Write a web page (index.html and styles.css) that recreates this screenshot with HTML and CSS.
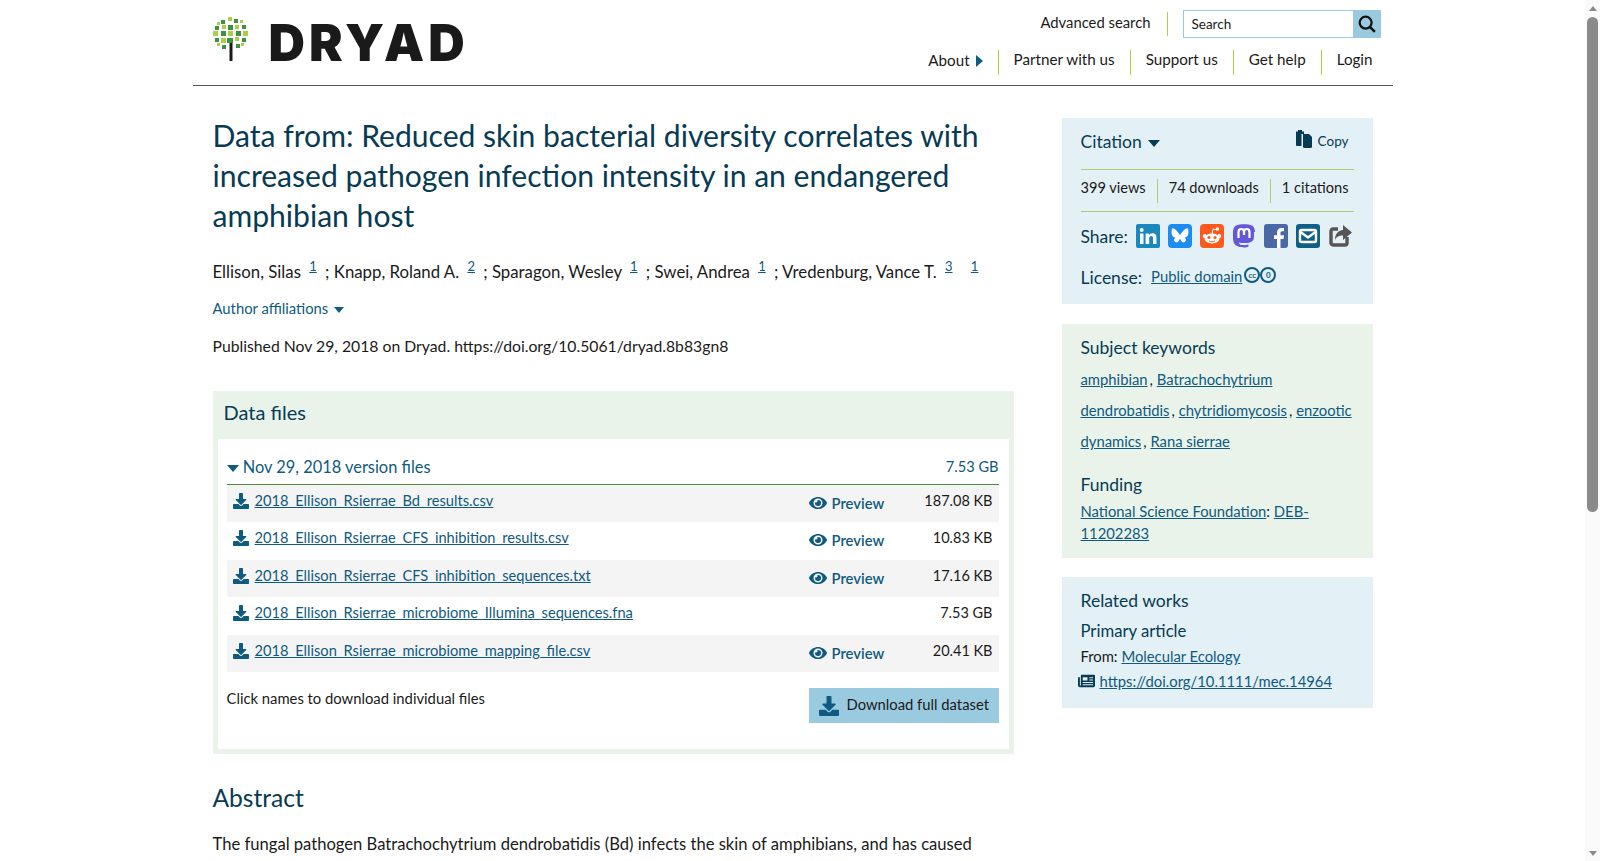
FILE: index.html
```html
<!DOCTYPE html>
<html lang="en">
<head>
  <meta charset="UTF-8" />
  <title>Data from: Reduced skin bacterial diversity | Dryad</title>
  <link rel="stylesheet" href="styles.css">
</head>
<body>
  <svg class="sprites" width="0" height="0">
    <symbol id="i-download" viewBox="0 0 512 512">
      <path d="M216 0h80c13 0 24 11 24 24v168h88c18 0 27 21 14 34L270 378c-8 8-20 8-28 0L90 226c-13-13-4-34 14-34h88V24c0-13 11-24 24-24zM512 376v112c0 13-11 24-24 24H24c-13 0-24-11-24-24V376c0-13 11-24 24-24h147l49 49c20 20 52 20 72 0l49-49h147c13 0 24 11 24 24z"/>
    </symbol>
    <symbol id="i-eye" viewBox="0 0 576 512">
      <path d="M572 241C518 136 410 64 288 64S58 136 4 241a32 32 0 0 0 0 30c54 105 162 177 284 177s230-72 284-177a32 32 0 0 0 0-30zM288 400a144 144 0 1 1 144-144 144 144 0 0 1-144 144zm0-240a95 95 0 0 0-25 4 48 48 0 0 1-67 67 96 96 0 1 0 92-71z"/>
    </symbol>
  </svg>

  <div class="page">
    <header class="site-header">
      <a class="logo" href="#">
        <svg class="logo-tree" width="36" height="44" viewBox="0 0 36 44">
          <rect x="16.500" y="24" width="3" height="20" fill="#1a1a1a"/>
          <g fill="#3f9142">
            <rect x="8" y="3" width="4" height="4"/><rect x="21" y="2" width="4" height="4"/>
            <rect x="2" y="9" width="4" height="4"/><rect x="15" y="8" width="5" height="5"/><rect x="29" y="8" width="4" height="4"/>
            <rect x="8" y="14" width="5" height="5"/><rect x="23" y="14" width="5" height="5"/>
            <rect x="2" y="21" width="4" height="4"/><rect x="29" y="21" width="4" height="4"/>
            <rect x="14" y="21" width="6" height="5"/><rect x="9" y="28" width="4" height="4"/><rect x="23" y="27" width="4" height="4"/>
          </g>
          <g fill="#a8cf45">
            <rect x="15" y="0" width="4" height="4"/><rect x="27" y="3" width="3" height="3"/><rect x="4" y="5" width="3" height="3"/>
            <rect x="9" y="8" width="4" height="4"/><rect x="22" y="8" width="4" height="4"/><rect x="0" y="14" width="5" height="5"/>
            <rect x="15" y="14" width="5" height="5"/><rect x="30" y="14" width="5" height="5"/><rect x="8" y="21" width="5" height="5"/>
            <rect x="22" y="20" width="4" height="4"/><rect x="4" y="26" width="3" height="3"/><rect x="28" y="26" width="3" height="3"/>
          </g>
        </svg>
        <span class="logo-word">DRYAD</span>
      </a>
      <div class="header-right">
        <div class="util-row">
          <a class="util-link" href="#">Advanced search</a>
          <form class="search">
            <input class="search-input" type="text" placeholder="Search">
            <button class="search-btn" type="button" aria-label="Search">
              <svg width="18" height="18" viewBox="0 0 16 16"><circle cx="6.800" cy="6.800" r="5.300" fill="none" stroke="#111" stroke-width="2"/><path d="M10.800 10.800l4.200 4.200" stroke="#111" stroke-width="2.200"/></svg>
            </button>
          </form>
        </div>
        <nav class="main-nav">
          <a class="nav-item nav-about" href="#">About <span class="caret-right"></span></a>
          <a class="nav-item" href="#">Partner with us</a>
          <a class="nav-item" href="#">Support us</a>
          <a class="nav-item" href="#">Get help</a>
          <a class="nav-item" href="#">Login</a>
        </nav>
      </div>
    </header>

    <div class="layout">
      <main class="content">
        <h1 class="title">Data from: Reduced skin bacterial diversity correlates with increased pathogen infection intensity in an endangered amphibian host</h1>
        <p class="authors">Ellison, Silas <sup><a href="#">1</a></sup> ; Knapp, Roland A. <sup><a href="#">2</a></sup> ; Sparagon, Wesley <sup><a href="#">1</a></sup> ; Swei, Andrea <sup><a href="#">1</a></sup> ; Vredenburg, Vance T. <sup><a href="#">3</a></sup> <sup class="sup-last"><a href="#">1</a></sup></p>
        <p class="affil">Author affiliations <span class="caret-down"></span></p>
        <p class="published">Published Nov 29, 2018 on Dryad. https://doi.org/10.5061/dryad.8b83gn8</p>

        <section class="files">
          <h2 class="files-title">Data files</h2>
          <div class="files-inner">
            <div class="version">
              <span class="version-name"><span class="caret-down"></span> Nov 29, 2018 version files</span>
              <span class="version-size">7.53 GB</span>
            </div>
            <ul class="file-list">
              <li class="file">
                <a class="file-name" href="#"><svg class="dl-icon"><use href="#i-download"/></svg><span>2018_Ellison_Rsierrae_Bd_results.csv</span></a>
                <a class="preview" href="#"><svg class="eye"><use href="#i-eye"/></svg>Preview</a>
                <span class="size">187.08 KB</span>
              </li>
              <li class="file">
                <a class="file-name" href="#"><svg class="dl-icon"><use href="#i-download"/></svg><span>2018_Ellison_Rsierrae_CFS_inhibition_results.csv</span></a>
                <a class="preview" href="#"><svg class="eye"><use href="#i-eye"/></svg>Preview</a>
                <span class="size">10.83 KB</span>
              </li>
              <li class="file">
                <a class="file-name" href="#"><svg class="dl-icon"><use href="#i-download"/></svg><span>2018_Ellison_Rsierrae_CFS_inhibition_sequences.txt</span></a>
                <a class="preview" href="#"><svg class="eye"><use href="#i-eye"/></svg>Preview</a>
                <span class="size">17.16 KB</span>
              </li>
              <li class="file">
                <a class="file-name" href="#"><svg class="dl-icon"><use href="#i-download"/></svg><span>2018_Ellison_Rsierrae_microbiome_Illumina_sequences.fna</span></a>
                <span class="size">7.53 GB</span>
              </li>
              <li class="file">
                <a class="file-name" href="#"><svg class="dl-icon"><use href="#i-download"/></svg><span>2018_Ellison_Rsierrae_microbiome_mapping_file.csv</span></a>
                <a class="preview" href="#"><svg class="eye"><use href="#i-eye"/></svg>Preview</a>
                <span class="size">20.41 KB</span>
              </li>
            </ul>
            <div class="files-foot">
              <span>Click names to download individual files</span>
              <a class="dl-all" href="#"><svg class="dl-icon-big"><use href="#i-download"/></svg><span class="dl-all-text">Download full dataset</span></a>
            </div>
          </div>
        </section>

        <h2 class="abstract-title">Abstract</h2>
        <p class="abstract">The fungal pathogen Batrachochytrium dendrobatidis (Bd) infects the skin of amphibians, and has caused</p>
      </main>

      <aside class="sidebar">
        <section class="panel panel-blue panel-cite">
          <div class="cite-row">
            <span class="cite-label">Citation <span class="caret-down caret-dark"></span></span>
            <span class="copy">
              <svg width="18" height="20" viewBox="0 0 18 20"><path d="M1 2.500h2V1h4v1.500h2V5H6.500v12H2a1 1 0 0 1-1-1z" fill="#073b54"/><path d="M8 5h6l3 3v9.500a1.500 1.500 0 0 1-1.500 1.500H9.500A1.500 1.500 0 0 1 8 17.500z" fill="#073b54"/></svg>
              Copy
            </span>
          </div>
          <div class="stats">
            <span>399 views</span>
            <span>74 downloads</span>
            <span>1 citations</span>
          </div>
          <div class="share">
            <span class="share-label">Share:</span>
            <svg class="soc" viewBox="0 0 24 24"><rect width="24" height="24" rx="2" fill="#1b87bd"/><path d="M4 9.500h3.500V20H4zM5.700 4a2 2 0 1 1 0 4 2 2 0 0 1 0-4zM9.600 9.500H13V11c.6-1 1.800-1.800 3.500-1.800 3.300 0 4 2.200 4 5V20H17v-5.200c0-1.300-.1-2.700-1.700-2.700S13.200 13.300 13.200 14.700V20H9.600z" fill="#fff"/></svg>
            <svg class="soc" viewBox="0 0 24 24"><rect width="24" height="24" rx="4" fill="#1c8cf0"/><path d="M12 11.200c-.8-1.600-3-4.500-5-6-1.900-1.300-2.700-1-3.200 0-.4.700-.3 4.300.3 6.100.7 1.900 2.900 2.600 4.700 2.300-3 .5-3.700 2.100-2.100 3.800 3 3 4.300-.8 4.700-1.800l.6-.5.6.5c.4 1 1.700 4.800 4.700 1.800 1.600-1.700.9-3.300-2.100-3.800 1.800.3 4-.4 4.700-2.300.6-1.800.7-5.400.3-6.100-.5-1-1.300-1.300-3.200 0-2 1.500-4.200 4.400-5 6z" fill="#fff"/></svg>
            <svg class="soc" viewBox="0 0 24 24"><rect width="24" height="24" rx="4" fill="#fc5a1c"/><ellipse cx="12" cy="14.500" rx="7.500" ry="5" fill="#fff"/><circle cx="4.800" cy="12" r="2" fill="#fff"/><circle cx="19.200" cy="12" r="2" fill="#fff"/><circle cx="17.500" cy="5" r="1.700" fill="#fff"/><path d="M12 10l1-5 4 .8" fill="none" stroke="#fff" stroke-width="1"/><circle cx="9" cy="13.500" r="1.500" fill="#fc5a1c"/><circle cx="15" cy="13.500" r="1.500" fill="#fc5a1c"/><path d="M9 16.800c1.800 1.200 4.200 1.200 6 0" fill="none" stroke="#fc5a1c" stroke-width="1"/></svg>
            <svg class="soc" viewBox="0 0 24 24"><path d="M23 8C23 3 20 1.500 20 1.500 18 .6 15 .3 12 .3S6 .6 4 1.500c0 0-3 1.500-3 6.500 0 6-.6 12 4 14 3 1.300 6 1.500 8 1.400 1.700-.1 3.500-.7 3.500-.7l-.1-2.200s-2.300.8-4.700.6c-2.500-.1-4.500-.4-4.800-2.700 2.800.7 5.500.8 8.300.6 3-.3 6.200-1.900 6.500-4.300.6-2.600.3-6.700.3-6.700z" fill="#6458d6"/><path d="M6.500 14V8.300C6.500 6.300 7.700 5 9.300 5c1.600 0 2.700 1.100 2.700 3v3M12 11V8c0-1.900 1.100-3 2.700-3 1.600 0 2.800 1.300 2.800 3.300V14" fill="none" stroke="#fff" stroke-width="2.200"/></svg>
            <svg class="soc" viewBox="0 0 24 24"><rect width="24" height="24" rx="3" fill="#4a68a5"/><path d="M13 24v-9h-3v-3.800h3V8.600C13 5.500 14.900 4 17.500 4c1.200 0 2.300.1 2.500.1v3.200h-1.800c-1.400 0-1.700.7-1.700 1.700v2.200h3.500l-.5 3.800h-3v9z" fill="#fff"/></svg>
            <svg class="soc" viewBox="0 0 24 24"><rect width="24" height="24" rx="3" fill="#0f6086"/><rect x="4" y="6" width="16" height="12" rx="1.500" fill="none" stroke="#fff" stroke-width="2.400"/><path d="M4.500 8l7.500 5.500L19.500 8" fill="none" stroke="#fff" stroke-width="2.400"/></svg>
            <svg class="soc" viewBox="0 0 24 24"><path d="M19 13v6a2 2 0 0 1-2 2H5a2 2 0 0 1-2-2V7a2 2 0 0 1 2-2h5" fill="none" stroke="#555" stroke-width="3.400"/><path d="M15 1l9 7.500-9 7.500v-4.500c-4 0-6.500 1-8 4.500 0-6 3-9.500 8-10z" fill="#555"/></svg>
          </div>
          <div class="license">
            <span class="license-label">License:</span>
            <a href="#">Public domain</a>
            <span class="cc"><span class="cc-mark">cc</span><span class="cc-mark">0</span></span>
          </div>
        </section>

        <section class="panel panel-green panel-kw">
          <h3 class="side-title">Subject keywords</h3>
          <p class="keywords"><a href="#">amphibian</a><span class="sep">,</span> <a href="#">Batrachochytrium</a> <a href="#">dendrobatidis</a><span class="sep">,</span> <a href="#">chytridiomycosis</a><span class="sep">,</span> <a href="#">enzootic</a> <a href="#">dynamics</a><span class="sep">,</span> <a href="#">Rana sierrae</a></p>
          <h3 class="side-title funding-title">Funding</h3>
          <p class="funding"><a href="#">National Science Foundation</a><span class="sep">:</span> <a class="grant" href="#">DEB-</a><br><a href="#">11202283</a></p>
        </section>

        <section class="panel panel-blue panel-rel">
          <h3 class="side-title">Related works</h3>
          <h4 class="side-sub">Primary article</h4>
          <p class="from">From: <a href="#">Molecular Ecology</a></p>
          <p class="rel-doi">
            <svg class="news" viewBox="0 0 18 14"><path d="M3 1.500a1 1 0 0 1 1-1h13a1 1 0 0 1 1 1V12a1.500 1.500 0 0 1-1.500 1.500H2A2 2 0 0 1 0 11.500V3h2v8.500a.5.500 0 0 0 1 0zM5 3v3.500h5V3zm7 0v1h4V3zm0 2.500v1h4v-1zM5 8v1h11V8zm0 2.500v1h11v-1z" fill="#073b54" fill-rule="evenodd"/></svg>
            <a href="#">https://doi.org/10.1111/mec.14964</a>
          </p>
        </section>
      </aside>
    </div>
  </div>

  <div class="scrollbar">
    <span class="sb-up"></span>
    <span class="sb-thumb"></span>
    <span class="sb-down"></span>
  </div>
</body>
</html>
```

FILE: styles.css
```css
* {
  box-sizing: border-box;
}
html {
  scrollbar-width: none;
}
body {
  margin: 0;
  padding-right: 15px;
  min-height: 1436px;
  font-family: Lato, sans-serif;
  font-size: 14.800px;
  color: #1a1a1a;
  background: #fff;
}
a {
  color: #0f5a80;
}
p, h1, h2, h3, h4, ul {
  margin: 0;
  padding: 0;
  font-weight: 400;
}
.sprites {
  position: absolute;
}
.page {
  width: 1200px;
  margin: 0 auto;
}

/* drawn scrollbar, lies over the page edge */
.scrollbar {
  position: fixed;
  top: 0;
  right: 0;
  bottom: 0;
  display: flex;
  flex-direction: column;
  align-items: center;
  width: 15px;
  background: #fafafa;
}
.sb-up, .sb-down {
  width: 0;
  height: 0;
  border-left: 4.500px solid transparent;
  border-right: 4.500px solid transparent;
}
.sb-up {
  margin-top: 6px;
  border-bottom: 5px solid #8a8a8a;
}
.sb-thumb {
  width: 11px;
  height: 495px;
  margin-top: 6px;
  border-radius: 6px;
  background: #8a8a8a;
}
.sb-down {
  margin-top: auto;
  margin-bottom: 5px;
  border-top: 5px solid #8a8a8a;
}

/* header */
.site-header {
  display: flex;
  justify-content: space-between;
  height: 86px;
  padding: 0 12px 0 20px;
  border-bottom: 1px solid #555;
}
.logo {
  display: flex;
  align-items: center;
  gap: 20px;
  height: 78px;
  text-decoration: none;
}
.logo-word {
  margin-top: 6px;
  font-family: Inter, sans-serif;
  font-weight: 900;
  font-size: 50.500px;
  letter-spacing: 4px;
  color: #1a1a1a;
}
.header-right {
  display: flex;
  flex-direction: column;
  align-items: flex-end;
}
.util-row {
  display: flex;
  align-items: center;
  height: 48px;
}
.util-link {
  padding: 0 16px 3px 0;
  height: 24px;
  line-height: 20px;
  color: #1a1a1a;
  text-decoration: none;
  border-right: 1px solid #a8cf45;
}
.search {
  display: flex;
  margin-left: 15px;
}
.search-input {
  width: 170px;
  height: 28px;
  padding: 0 8px;
  font: 13.500px Lato, sans-serif;
  border: 1px solid #9acae0;
  border-right: 0;
  outline: 0;
}
.search-input::placeholder {
  color: #1a1a1a;
  opacity: 1;
}
.search-btn {
  display: flex;
  align-items: center;
  justify-content: center;
  width: 28px;
  height: 28px;
  padding: 0;
  border: 0;
  background: #9acae0;
}
.main-nav {
  display: flex;
  align-items: center;
  margin-top: 2px;
  padding-right: 8px;
}
.nav-item {
  height: 25px;
  padding: 0 15px;
  font-size: 15.200px;
  line-height: 19px;
  color: #1a1a1a;
  text-decoration: none;
  border-left: 1px solid #a8cf45;
}
.nav-item:last-child {
  padding-right: 0;
}
.nav-about {
  border-left: 0;
  padding-top: 1px;
}
.caret-right {
  display: inline-block;
  width: 0;
  height: 0;
  margin-left: 2px;
  border-left: 7px solid #0f5a80;
  border-top: 6px solid transparent;
  border-bottom: 6px solid transparent;
  vertical-align: -1px;
}
.caret-down {
  display: inline-block;
  width: 0;
  height: 0;
  margin-left: 2px;
  border-top: 7px solid #0f5a80;
  border-left: 6px solid transparent;
  border-right: 6px solid transparent;
  vertical-align: 1px;
}
.caret-dark {
  border-top-color: #073b54;
}

/* main column */
.layout {
  display: flex;
  justify-content: space-between;
  padding: 0 20px;
}
.content {
  width: 801px;
}
.title {
  margin-top: 29px;
  font-size: 30.100px;
  line-height: 40px;
  color: #073b54;
}
.authors {
  margin-top: 16px;
  font-size: 16.800px;
  line-height: 30px;
}
.authors sup {
  font-size: 13px;
  margin: 0 4px;
}
.sup-last {
  margin-left: 10px !important;
}
.affil {
  margin-top: 9px;
  line-height: 24px;
  color: #0f5a80;
}
.affil .caret-down {
  border-top-width: 6px;
  border-left-width: 5px;
  border-right-width: 5px;
}
.published {
  margin-top: 14px;
  font-size: 15.750px;
  line-height: 24px;
}
.files {
  margin-top: 33px;
  height: 363px;
  padding: 0 5px 5px;
  background: #e9f3ea;
}
.files-title {
  height: 48px;
  padding-left: 6px;
  font-size: 20px;
  line-height: 43px;
  color: #073b54;
}
.files-inner {
  height: 310px;
  padding: 14px 10px 0 9px;
  background: #fff;
}
.version {
  display: flex;
  justify-content: space-between;
  align-items: center;
  height: 32px;
  padding-bottom: 3px;
  border-bottom: 1px solid #4f8a3c;
  color: #0f5a80;
}
.version-name {
  font-size: 16.400px;
}
.version-name .caret-down {
  margin-left: 0;
}
.version-size {
  font-size: 14.600px;
}
.file-list {
  list-style: none;
}
.file {
  display: flex;
  align-items: flex-start;
  height: 37.500px;
  padding: 6px 6px 0;
}
.file:nth-child(odd) {
  background: #f4f4f4;
}
.file-name {
  display: flex;
  align-items: center;
  gap: 6px;
  width: 576px;
  font-size: 14.650px;
  line-height: 20px;
}
.dl-icon {
  width: 16px;
  height: 16px;
  fill: #0f5a80;
  flex: none;
}
.preview {
  display: flex;
  align-items: center;
  gap: 5px;
  margin-top: 2px;
  font-weight: 600;
  line-height: 20px;
  text-decoration: none;
}
.eye {
  width: 18px;
  height: 16px;
  fill: #0f5a80;
}
.size {
  margin-left: auto;
  font-size: 14.500px;
  line-height: 20px;
}
.files-foot {
  display: flex;
  justify-content: space-between;
  margin-top: 16px;
  line-height: 20px;
}
.dl-all {
  display: flex;
  align-items: center;
  gap: 8px;
  width: 190px;
  height: 35px;
  padding-left: 10px;
  color: #1a1a1a;
  text-decoration: none;
  white-space: nowrap;
  background: #9acae0;
}
.dl-all-text {
  margin-top: -4px;
}
.dl-icon-big {
  width: 20px;
  height: 20px;
  fill: #0f5a80;
}
.abstract-title {
  margin-top: 28px;
  font-size: 24.600px;
  line-height: 32px;
  color: #073b54;
}
.abstract {
  margin-top: 17px;
  font-size: 16.600px;
  line-height: 26px;
}

/* sidebar */
.sidebar {
  width: 311px;
  margin-top: 32px;
}
.panel {
  padding: 0 19px;
}
.panel-blue {
  background: #e3f0f6;
}
.panel-green {
  background: #e9f3ea;
}
.panel-cite {
  height: 186px;
}
.cite-row {
  display: flex;
  justify-content: space-between;
  height: 52px;
  padding-top: 11px;
  border-bottom: 1px solid #a8cf70;
  color: #073b54;
}
.cite-label {
  font-size: 17.500px;
  line-height: 26px;
}
.copy {
  display: flex;
  align-items: flex-start;
  gap: 5px;
  padding-right: 5px;
  font-size: 13.500px;
  line-height: 24px;
}
.stats {
  display: flex;
  align-items: center;
  height: 42px;
  border-bottom: 1px solid #a8cf70;
  font-size: 14.600px;
  white-space: nowrap;
}
.stats span {
  height: 24px;
  padding-right: 11px;
  line-height: 18px;
}
.stats span + span {
  padding-left: 11px;
  border-left: 1px solid #a8cf70;
}
.share {
  display: flex;
  align-items: center;
  gap: 8px;
  height: 48px;
  color: #073b54;
  font-size: 17.500px;
}
.soc {
  width: 24px;
  height: 24px;
  flex: none;
}
.license {
  display: flex;
  align-items: center;
  height: 34px;
  white-space: nowrap;
}
.license-label {
  margin-right: 9px;
  font-size: 17.500px;
  color: #073b54;
}
.license a {
  margin-top: -2px;
}
.cc {
  display: flex;
  margin-left: 2px;
  margin-top: -4px;
}
.cc-mark {
  display: flex;
  align-items: center;
  justify-content: center;
  width: 16px;
  height: 16px;
  border: 2px solid #0f5a80;
  border-radius: 50%;
  color: #0f5a80;
  font-size: 8px;
  font-weight: 700;
}
.panel-kw {
  height: 234px;
  margin-top: 20px;
  padding-top: 11px;
}
.side-title {
  font-size: 17.500px;
  line-height: 26px;
  color: #073b54;
}
.keywords {
  margin-top: 3px;
  line-height: 31px;
}
.sep {
  display: inline-block;
}
.keywords .sep {
  margin-left: 2px;
}
.funding-title {
  margin-top: 15px;
}
.funding {
  margin-top: 2px;
  line-height: 22px;
}
.panel-rel {
  height: 131px;
  margin-top: 19px;
  padding-top: 11px;
}
.side-sub {
  margin-top: 4px;
  font-size: 16.700px;
  line-height: 26px;
  color: #073b54;
}
.from {
  line-height: 24px;
}
.rel-doi {
  display: flex;
  align-items: center;
  gap: 5px;
  margin-left: -3px;
  line-height: 26px;
}
.news {
  width: 17px;
  height: 14px;
}
```
